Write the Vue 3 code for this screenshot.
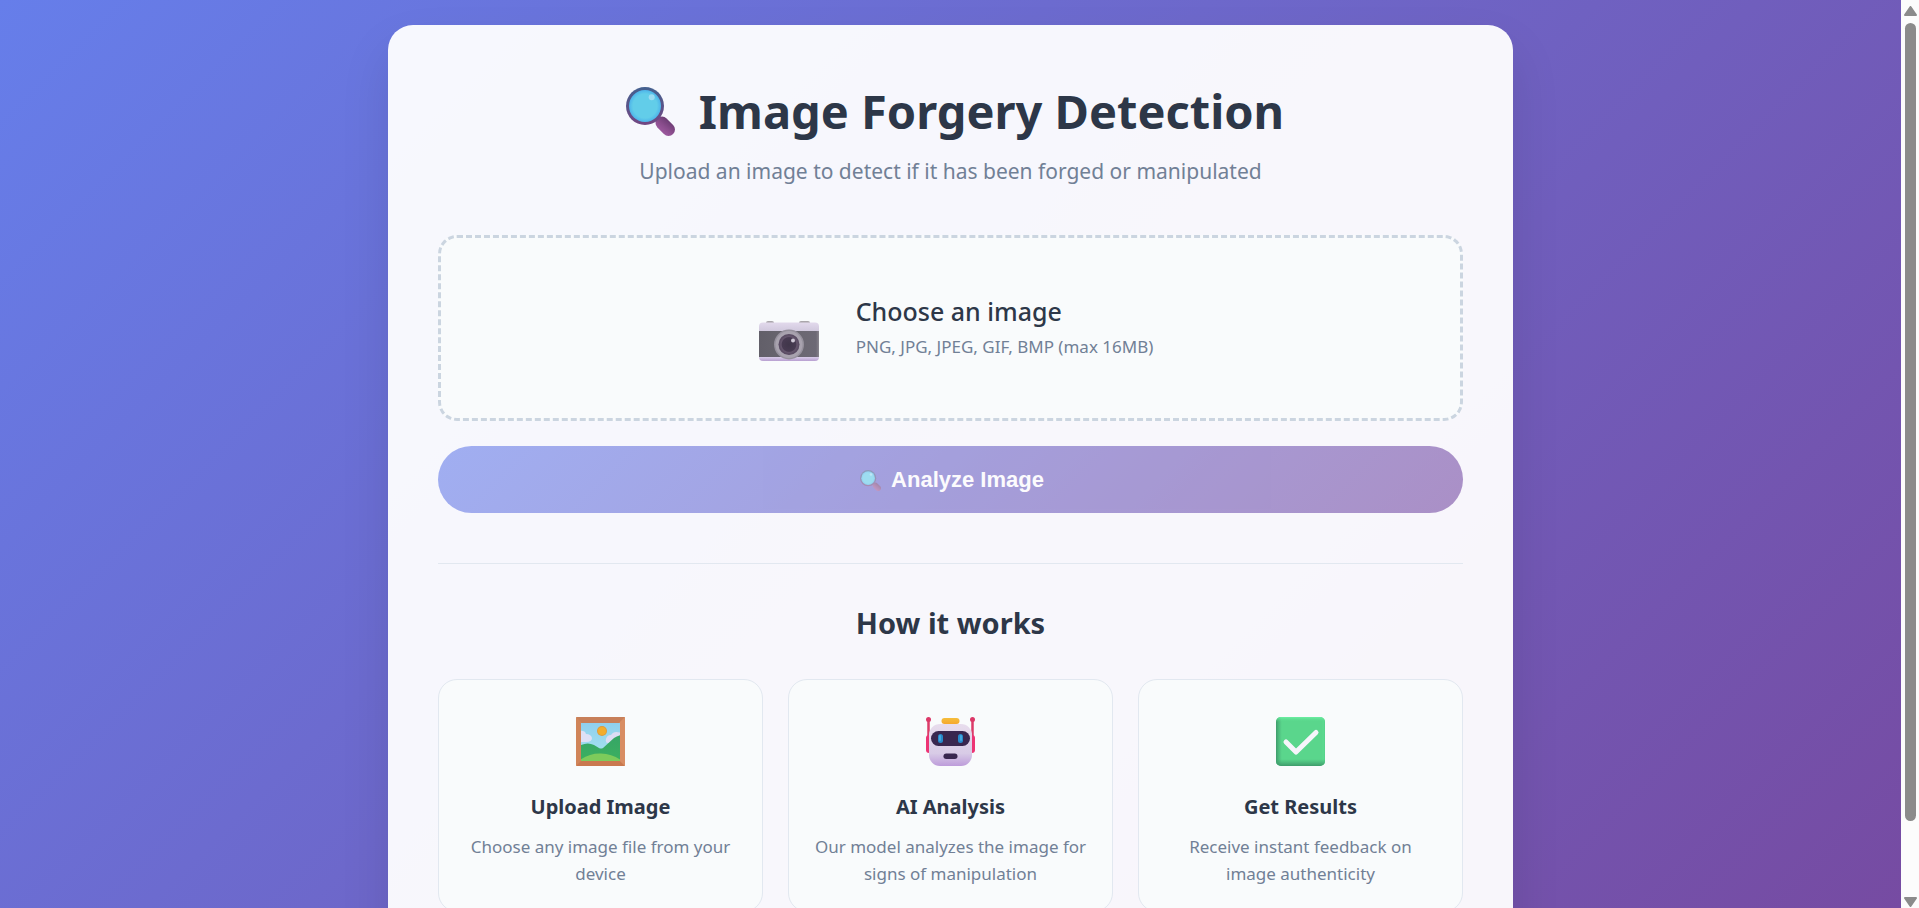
<script setup>
import { ref } from 'vue'

const fileName = ref('')
const onPick = (e) => {
  fileName.value = e.target.files.length ? e.target.files[0].name : ''
}

const steps = [
  { id: 'picture', title: 'Upload Image', text: 'Choose any image file from your device' },
  { id: 'robot', title: 'AI Analysis', text: 'Our model analyzes the image for signs of manipulation' },
  { id: 'check', title: 'Get Results', text: 'Receive instant feedback on image authenticity' },
]
</script>

<template>
  <div class="shell">
    <svg class="defs" aria-hidden="true">
      <defs>
        <linearGradient id="rim" x1="0" y1="0" x2="0" y2="1">
          <stop offset="0" stop-color="#43618f" /><stop offset="1" stop-color="#724682" />
        </linearGradient>
        <radialGradient id="lens">
          <stop offset="0.75" stop-color="#62cde9" /><stop offset="1" stop-color="#4db4ea" />
        </radialGradient>
        <linearGradient id="handle" gradientUnits="userSpaceOnUse" x1="44" y1="34" x2="36" y2="44">
          <stop offset="0" stop-color="#6b3c73" /><stop offset="0.6" stop-color="#8a4d8d" /><stop offset="1" stop-color="#99579b" />
        </linearGradient>
        <symbol id="magnifier" viewBox="0 0 49 49">
          <path d="M36 36 L42.500 42.500" stroke="url(#handle)" stroke-width="13" stroke-linecap="round" />
          <circle cx="19" cy="19" r="19" fill="url(#rim)" />
          <circle cx="19" cy="19" r="16" fill="url(#lens)" />
          <circle cx="25.700" cy="10.300" r="3" fill="#9bdcf2" />
        </symbol>
      </defs>
    </svg>

    <main class="page">
      <div class="container">
        <header class="header">
          <h1>
            <svg class="title-icon" aria-hidden="true"><use href="#magnifier" /></svg>
            <span>Image Forgery Detection</span>
          </h1>
          <p>Upload an image to detect if it has been forged or manipulated</p>
        </header>

        <form @submit.prevent>
          <label class="drop" for="file">
            <input id="file" class="file" type="file" accept="image/*" @change="onPick" />
            <svg class="camera" viewBox="0 0 72 66" aria-hidden="true">
              <defs>
                <linearGradient id="body" x1="0" y1="0" x2="0" y2="1">
                  <stop offset="0" stop-color="#e2d9ec" /><stop offset="0.24" stop-color="#cfc7dc" />
                  <stop offset="0.9" stop-color="#d8cbe8" /><stop offset="1" stop-color="#b79fd0" />
                </linearGradient>
                <linearGradient id="grip" x1="0" y1="0" x2="1" y2="0">
                  <stop offset="0" stop-color="#625f69" /><stop offset="0.5" stop-color="#69666f" />
                  <stop offset="0.95" stop-color="#6d6975" /><stop offset="1" stop-color="#89858e" />
                </linearGradient>
                <radialGradient id="glass">
                  <stop offset="0" stop-color="#40364a" /><stop offset="0.65" stop-color="#483b52" />
                  <stop offset="0.75" stop-color="#65566d" /><stop offset="1" stop-color="#55475f" />
                </radialGradient>
              </defs>
              <rect x="18" y="26" width="8" height="5" rx="2" fill="#aaa6ab" />
              <rect x="51" y="26" width="11" height="5" rx="2" fill="#aaa6ab" />
              <rect x="11" y="27.500" width="60" height="38.500" rx="4" fill="url(#body)" />
              <rect x="11" y="36" width="60" height="26" fill="url(#grip)" />
              <circle cx="41" cy="49.500" r="15" fill="#96919d" />
              <circle cx="41" cy="49.500" r="13.500" fill="#a8a2ae" />
              <circle cx="41" cy="49.500" r="10.500" fill="url(#glass)" />
              <circle cx="45" cy="45.500" r="2" fill="#cfc8d6" />
            </svg>
            <span class="drop-text">
              <strong>{{ fileName || 'Choose an image' }}</strong>
              <small>PNG, JPG, JPEG, GIF, BMP (max 16MB)</small>
            </span>
          </label>

          <button class="analyze" type="submit" :disabled="!fileName">
            <svg class="button-icon" aria-hidden="true"><use href="#magnifier" /></svg>
            <span>Analyze Image</span>
          </button>
        </form>

        <section class="how">
          <h2>How it works</h2>
          <div class="steps">
            <article v-for="s in steps" :key="s.id" class="step">
              <svg v-if="s.id === 'picture'" class="step-icon" viewBox="0 0 49 49" aria-hidden="true">
                <defs>
                  <linearGradient id="sky" x1="0" y1="0" x2="0" y2="1">
                    <stop offset="0" stop-color="#8fd0ee" /><stop offset="1" stop-color="#a9e4ee" />
                  </linearGradient>
                  <linearGradient id="hill" x1="0" y1="0" x2="0" y2="1">
                    <stop offset="0" stop-color="#35a566" /><stop offset="1" stop-color="#3cb060" />
                  </linearGradient>
                  <clipPath id="frame"><rect x="5" y="6" width="39" height="38" /></clipPath>
                </defs>
                <rect width="49" height="49" rx="1" fill="#d08459" />
                <path d="M0 0 H49 L43 6 H6Z" fill="#c77f59" />
                <path d="M0 49 H49 L43 43 H6Z" fill="#c9784f" />
                <path d="M49 0 V49 L43 43 V6Z" fill="#d88d63" />
                <g clip-path="url(#frame)">
                  <rect x="5" y="6" width="39" height="38" fill="url(#sky)" />
                  <path d="M3 14 Q9 13 10 17 Q15 17 16 21 Q16 25 10 25 H3Z" fill="#dfe0f5" />
                  <path d="M30 22 Q31 18 35 18 Q38 13 45 16 V26 H32Q29 26 30 22Z" fill="#dcdcf5" />
                  <path d="M5 28 Q12 25 18 28 L23 31 Q25 32 27 31 L38 21 Q41 19 45 18 V45 H5Z" fill="url(#hill)" />
                  <path d="M4 43 Q14 36 25 36.500 Q37 37 46 44 V46 H4Z" fill="#7dcb5b" />
                </g>
                <circle cx="26" cy="14" r="5" fill="#dd9a3b" />
                <circle cx="26" cy="14" r="4" fill="#f2ad2d" />
              </svg>

              <svg v-else-if="s.id === 'robot'" class="step-icon" viewBox="0 0 49 49" aria-hidden="true">
                <defs>
                  <linearGradient id="head" x1="0" y1="0" x2="0" y2="1">
                    <stop offset="0" stop-color="#e8dded" /><stop offset="0.7" stop-color="#d8cbe6" />
                    <stop offset="1" stop-color="#bd9cda" />
                  </linearGradient>
                  <linearGradient id="hat" x1="0" y1="0" x2="0" y2="1">
                    <stop offset="0" stop-color="#f5bd3c" /><stop offset="1" stop-color="#f6a82d" />
                  </linearGradient>
                </defs>
                <path d="M2.500 3 V20 M46.500 3 V20" stroke="#dc3b68" stroke-width="2.500" />
                <circle cx="2.500" cy="2.500" r="2.500" fill="#dc3868" />
                <circle cx="46.500" cy="2.500" r="2.500" fill="#dc3868" />
                <rect x="0" y="18" width="7" height="18" rx="3" fill="#ed3474" />
                <rect x="42" y="18" width="7" height="18" rx="3" fill="#ed3474" />
                <rect x="3" y="7" width="43" height="42" rx="11" fill="url(#head)" />
                <rect x="15.500" y="1" width="18" height="6" rx="3" fill="url(#hat)" />
                <rect x="5" y="14" width="39" height="15" rx="7.500" fill="#39274f" />
                <rect x="12" y="17" width="5" height="9" rx="2.500" fill="#2789c9" />
                <rect x="32" y="17" width="5" height="9" rx="2.500" fill="#2789c9" />
                <rect x="13" y="18" width="2" height="6" rx="1" fill="#44a8df" />
                <rect x="34" y="18" width="2" height="6" rx="1" fill="#44a8df" />
                <rect x="17.500" y="36.500" width="14" height="5.500" rx="2.700" fill="#39274f" />
              </svg>

              <svg v-else class="step-icon" viewBox="0 0 49 49" aria-hidden="true">
                <defs>
                  <linearGradient id="edgeY" x1="0" y1="0" x2="0" y2="1">
                    <stop offset="0" stop-color="#6cf0a3" /><stop offset="0.1" stop-color="#5ad68c" stop-opacity="0" />
                    <stop offset="0.86" stop-color="#42a370" stop-opacity="0" /><stop offset="1" stop-color="#3f9b6b" />
                  </linearGradient>
                  <linearGradient id="edgeX" x1="0" y1="0" x2="1" y2="0">
                    <stop offset="0" stop-color="#3f9b6b" /><stop offset="0.12" stop-color="#46a976" stop-opacity="0" />
                    <stop offset="0.94" stop-color="#66e89b" stop-opacity="0" /><stop offset="1" stop-color="#54cf88" />
                  </linearGradient>
                </defs>
                <rect width="49" height="49" rx="5" fill="#5ad68c" />
                <rect width="49" height="49" rx="5" fill="url(#edgeX)" />
                <rect width="49" height="49" rx="5" fill="url(#edgeY)" />
                <path d="M10 25 L20 35 L40 15.500" fill="none" stroke="#f6f5fb" stroke-width="5" stroke-linecap="round" stroke-linejoin="round" />
              </svg>
              <h3>{{ s.title }}</h3>
              <p>{{ s.text }}</p>
            </article>
          </div>
        </section>
      </div>
    </main>

    <div class="scrollbar" aria-hidden="true">
      <svg class="arrow" viewBox="0 0 13 10"><path d="M6.500 1 L12 9 H1Z" fill="#8b8b8b" stroke="#8b8b8b" stroke-width="2" stroke-linejoin="round" /></svg>
      <div class="track"><div class="thumb"></div></div>
      <svg class="arrow" viewBox="0 0 13 10"><path d="M6.500 9 L12 1 H1Z" fill="#8b8b8b" stroke="#8b8b8b" stroke-width="2" stroke-linejoin="round" /></svg>
    </div>
  </div>
</template>

<style>
body {
  margin: 0;
}
</style>

<style scoped>
* {
  box-sizing: border-box;
}
.shell {
  display: flex;
  height: 100vh;
  overflow: hidden;
  font-family: "Segoe UI", "Noto Sans", "Open Sans", sans-serif;
  color: #2d3748;
}
.defs {
  position: absolute;
  width: 0;
  height: 0;
}
.page {
  flex: 1;
  min-width: 0;
  padding: 25px;
  overflow-y: auto;
  scrollbar-width: none;
  background: linear-gradient(135deg, #667eea 0%, #764ba2 100%);
}
.container {
  max-width: 1125px;
  margin: 0 auto;
  padding: 50px;
  border-radius: 25px;
  background: rgba(255, 255, 255, 0.95);
  box-shadow: 0 25px 50px rgba(0, 0, 0, 0.1);
}
h1,
h2,
h3,
p {
  margin: 0;
}
.header {
  margin-bottom: 48px;
  text-align: center;
}
h1 {
  display: flex;
  align-items: center;
  justify-content: center;
  gap: 24px;
  padding-left: 9px;
  font-size: 47px;
  line-height: 72px;
  font-weight: 700;
}
.title-icon {
  width: 49px;
  height: 49px;
}
.header p {
  margin-top: 8px;
  font-size: 21px;
  line-height: 32px;
  color: #718096;
}
.drop {
  display: flex;
  align-items: center;
  justify-content: center;
  gap: 36px;
  padding: 57px;
  border: 3px dashed #cbd5e0;
  border-radius: 19px;
  background: #f9fbfc;
  cursor: pointer;
}
.file {
  position: absolute;
  width: 1px;
  height: 1px;
  opacity: 0;
}
.camera {
  width: 72px;
  height: 66px;
}
.drop-text {
  display: flex;
  flex-direction: column;
  gap: 6px;
}
.drop-text strong {
  font-size: 25px;
  line-height: 32px;
  font-weight: 500;
}
.drop-text small {
  font-size: 17px;
  line-height: 28px;
  color: #718096;
}
.analyze {
  display: flex;
  align-items: center;
  justify-content: center;
  gap: 10px;
  width: 100%;
  height: 67px;
  margin-top: 25px;
  padding: 1px 0 0 3px;
  border: 0;
  border-radius: 34px;
  background: linear-gradient(135deg, #667eea 0%, #764ba2 100%);
  color: #fff;
  font-family: Arial, "Liberation Sans", sans-serif;
  font-size: 22px;
  font-weight: 700;
  cursor: pointer;
}
.analyze:disabled {
  opacity: 0.6;
  cursor: not-allowed;
}
.button-icon {
  width: 21px;
  height: 21px;
}
.how {
  margin-top: 50px;
  padding-top: 39px;
  border-top: 1px solid #e2e8f0;
}
h2 {
  margin-bottom: 36px;
  font-size: 29px;
  line-height: 40px;
  font-weight: 700;
  text-align: center;
}
.steps {
  display: grid;
  grid-template-columns: repeat(3, 1fr);
  gap: 25px;
}
.step {
  padding: 37px 25px 24px;
  border: 1px solid #e2e8f0;
  border-radius: 19px;
  background: #f9fbfc;
  text-align: center;
}
.step-icon {
  display: block;
  width: 49px;
  height: 49px;
  margin: 0 auto 26px;
}
h3 {
  margin-bottom: 11px;
  font-size: 20px;
  line-height: 30px;
  font-weight: 700;
}
.step p {
  font-size: 17px;
  line-height: 27px;
  color: #718096;
}
.scrollbar {
  display: flex;
  flex-direction: column;
  align-items: center;
  width: 18px;
  padding: 6px 0 1px;
  background: #fcfcfc;
}
.arrow {
  width: 13px;
  height: 10px;
}
.track {
  flex: 1;
  width: 11px;
  padding: 7px 0;
}
.thumb {
  height: 92%;
  border-radius: 6px;
  background: #8b8b8b;
}
</style>
